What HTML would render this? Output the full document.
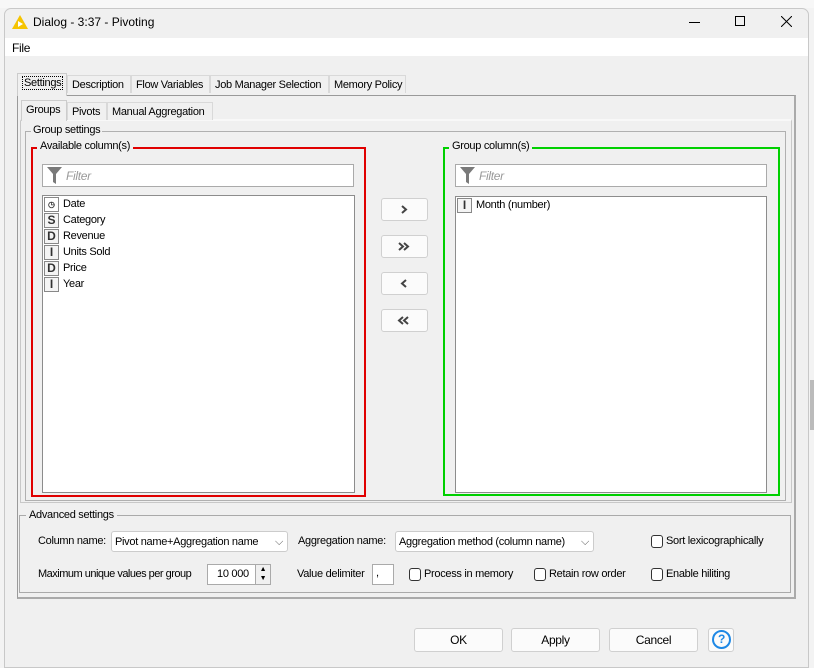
<!DOCTYPE html>
<html><head><style>
*{box-sizing:border-box;margin:0;padding:0}
body{width:814px;height:663px;background:#f3f3f3;font-family:"Liberation Sans",sans-serif;font-size:11px;letter-spacing:-0.3px;color:#000;position:relative;overflow:hidden}
.a{position:absolute}
.win{left:4px;top:8px;width:805px;height:660px;background:#f0f0f0;border:1px solid #c8c8c8;border-radius:7px 7px 0 0}
.t{white-space:nowrap}
.tab{position:absolute;height:18px;border:1px solid #d9d9d9;border-bottom:none;background:#f0f0f0;padding:3px 4px 0;white-space:nowrap}
.box{position:absolute;border:1px solid #8c8c8c;background:#fff}
.btn{position:absolute;border:1px solid #d0d0d0;border-radius:3px;background:#fbfbfb;text-align:center;color:#333}
.ic{display:inline-block;width:15px;height:15px;border:1px solid #888;background:#f4f4f4;font-weight:bold;font-size:12px;text-align:center;line-height:13px;margin-right:4px;vertical-align:middle;color:#333;letter-spacing:0}
.li{height:16px;line-height:16px;white-space:nowrap}
.cb{position:absolute;width:12px;height:13px;border:1px solid #333;border-radius:3px;background:#fff}
.combo{position:absolute;background:#fff;border:1px solid #ccc;border-radius:3px;padding:4px 3px;white-space:nowrap}
</style></head><body>
<div class="a" style="left:0;top:0;width:814px;height:8px;background:#f7f7f7"></div>
<div class="a" style="left:810px;top:380px;width:4px;height:50px;background:#bbb"></div>
<div class="a win"></div>
<!-- title -->
<svg class="a" style="left:12px;top:15px" width="16" height="14"><polygon points="8,0 16,14 0,14" fill="#f5c400"/><polygon points="6,6 11,9 6,12" fill="#fff"/></svg>
<div class="a t" style="left:33px;top:15px;font-size:12px;letter-spacing:0">Dialog - 3:37 - Pivoting</div>
<div class="a" style="left:689px;top:22px;width:11px;height:1px;background:#000"></div>
<div class="a" style="left:735px;top:16px;width:10px;height:10px;border:1px solid #000"></div>
<svg class="a" style="left:781px;top:16px" width="11" height="11"><path d="M0 0L11 11M11 0L0 11" stroke="#000" stroke-width="1"/></svg>
<div class="a" style="left:5px;top:38px;width:803px;height:18px;background:#fff"></div>
<div class="a t" style="left:12px;top:41px;font-size:12px">File</div>
<!-- outer tabs -->
<div class="tab" style="left:67px;top:75px;width:64px">Description</div>
<div class="tab" style="left:131px;top:75px;width:79px">Flow Variables</div>
<div class="tab" style="left:210px;top:75px;width:119px">Job Manager Selection</div>
<div class="tab" style="left:329px;top:75px;width:77px">Memory Policy</div>
<div class="a" style="left:17px;top:95px;width:779px;height:504px;border:1px solid #9a9a9a;border-right:2px solid #aaa;border-bottom:2px solid #aaa;background:#f0f0f0"></div>
<div class="tab" style="left:17px;top:73px;width:50px;height:23px;border-color:#ccc;background:#f0f0f0"><span style="border:1px dotted #000;padding:0 1px">Settings</span></div>
<!-- inner tabs -->
<div class="a" style="left:20px;top:119px;width:772px;height:384px;border:1px solid #c8c8c8;border-top:2px solid #f8f8f8"></div>
<div class="tab" style="left:67px;top:102px;width:40px">Pivots</div>
<div class="tab" style="left:107px;top:102px;width:106px">Manual Aggregation</div>
<div class="tab" style="left:21px;top:100px;width:46px;height:21px;border-color:#ccc">Groups</div>
<!-- group settings -->
<div class="a" style="left:25px;top:131px;width:761px;height:370px;border:1px solid #b0b0b0"></div>
<div class="a t" style="left:31px;top:124px;background:#f0f0f0;padding:0 2px">Group settings</div>
<div class="a" style="left:31px;top:147px;width:335px;height:350px;border:2px solid #e00000"></div>
<div class="a t" style="left:37px;top:140px;background:#f0f0f0;padding:0 3px">Available column(s)</div>
<div class="box" style="left:42px;top:164px;width:312px;height:23px;border-color:#aaa"></div>
<svg class="a" style="left:47px;top:167px" width="15" height="17"><path d="M0 0H15L9 7V17L6 15V7Z" fill="#7a7a7a"/></svg>
<div class="a t" style="left:66px;top:169px;font-size:12px;font-style:italic;color:#999">Filter</div>
<div class="box" style="left:42px;top:195px;width:313px;height:298px;padding:0 1px">
<div class="li"><span class="ic" style="font-size:8px;background:#fff">◷</span>Date</div>
<div class="li"><span class="ic">S</span>Category</div>
<div class="li"><span class="ic">D</span>Revenue</div>
<div class="li"><span class="ic">I</span>Units Sold</div>
<div class="li"><span class="ic">D</span>Price</div>
<div class="li"><span class="ic">I</span>Year</div>
</div>
<div class="btn" style="left:381px;top:198px;width:47px;height:23px"><svg width="45" height="21"><path d="M20 7L24 10.5L20 14" stroke="#444" stroke-width="2" fill="none"/></svg></div>
<div class="btn" style="left:381px;top:235px;width:47px;height:23px"><svg width="45" height="21"><path d="M17 7L21 10.5L17 14M22 7L26 10.5L22 14" stroke="#444" stroke-width="2" fill="none"/></svg></div>
<div class="btn" style="left:381px;top:272px;width:47px;height:23px"><svg width="45" height="21"><path d="M24 7L20 10.5L24 14" stroke="#444" stroke-width="2" fill="none"/></svg></div>
<div class="btn" style="left:381px;top:309px;width:47px;height:23px"><svg width="45" height="21"><path d="M21 7L17 10.5L21 14M26 7L22 10.5L26 14" stroke="#444" stroke-width="2" fill="none"/></svg></div>
<div class="a" style="left:443px;top:147px;width:337px;height:349px;border:2px solid #00d000"></div>
<div class="a t" style="left:449px;top:140px;background:#f0f0f0;padding:0 3px">Group column(s)</div>
<div class="box" style="left:455px;top:164px;width:312px;height:23px;border-color:#aaa"></div>
<svg class="a" style="left:460px;top:167px" width="15" height="17"><path d="M0 0H15L9 7V17L6 15V7Z" fill="#7a7a7a"/></svg>
<div class="a t" style="left:479px;top:169px;font-size:12px;font-style:italic;color:#999">Filter</div>
<div class="box" style="left:455px;top:196px;width:312px;height:297px;padding:0 1px">
<div class="li"><span class="ic">I</span>Month (number)</div>
</div>
<!-- advanced -->
<div class="a" style="left:19px;top:515px;width:772px;height:78px;border:1px solid #aaa"></div>
<div class="a t" style="left:26px;top:509px;background:#f0f0f0;padding:0 3px">Advanced settings</div>
<div class="a t" style="left:38px;top:535px">Column name:</div>
<div class="combo" style="left:111px;top:531px;width:177px;height:21px">Pivot name+Aggregation name <span style="position:absolute;right:4px;color:#555">⌵</span></div>
<div class="a t" style="left:298px;top:535px">Aggregation name:</div>
<div class="combo" style="left:395px;top:531px;width:199px;height:21px">Aggregation method (column name) <span style="position:absolute;right:4px;color:#555">⌵</span></div>
<div class="cb" style="left:651px;top:535px"></div><div class="a t" style="left:666px;top:535px">Sort lexicographically</div>
<div class="a t" style="left:38px;top:568px;letter-spacing:-0.5px">Maximum unique values per group</div>
<div class="a" style="left:207px;top:564px;width:64px;height:21px;border:1px solid #aaa;background:#fff"></div>
<div class="a t" style="left:217px;top:568px">10 000</div>
<div class="a" style="left:255px;top:565px;width:15px;height:19px;border-left:1px solid #aaa;font-size:7px;line-height:9px;text-align:center;background:#f0f0f0">▲<br>▼</div>
<div class="a t" style="left:297px;top:568px">Value delimiter</div>
<div class="a" style="left:372px;top:564px;width:22px;height:21px;border:1px solid #aaa;background:#fff;padding:2px 3px">,</div>
<div class="cb" style="left:409px;top:568px"></div><div class="a t" style="left:424px;top:568px">Process in memory</div>
<div class="cb" style="left:534px;top:568px"></div><div class="a t" style="left:549px;top:568px">Retain row order</div>
<div class="cb" style="left:651px;top:568px"></div><div class="a t" style="left:666px;top:568px">Enable hiliting</div>
<!-- bottom buttons -->
<div class="btn" style="left:414px;top:628px;width:89px;height:24px;line-height:22px;font-size:12px;color:#000">OK</div>
<div class="btn" style="left:511px;top:628px;width:89px;height:24px;line-height:22px;font-size:12px;color:#000">Apply</div>
<div class="btn" style="left:609px;top:628px;width:89px;height:24px;line-height:22px;font-size:12px;color:#000">Cancel</div>
<div class="btn" style="left:708px;top:628px;width:26px;height:24px"></div>
<div class="a" style="left:712px;top:630px;width:19px;height:19px;border:2px solid #1e88e5;border-radius:50%;color:#1e88e5;font-size:12px;text-align:center;line-height:15px;font-weight:bold">?</div>
</body></html>
